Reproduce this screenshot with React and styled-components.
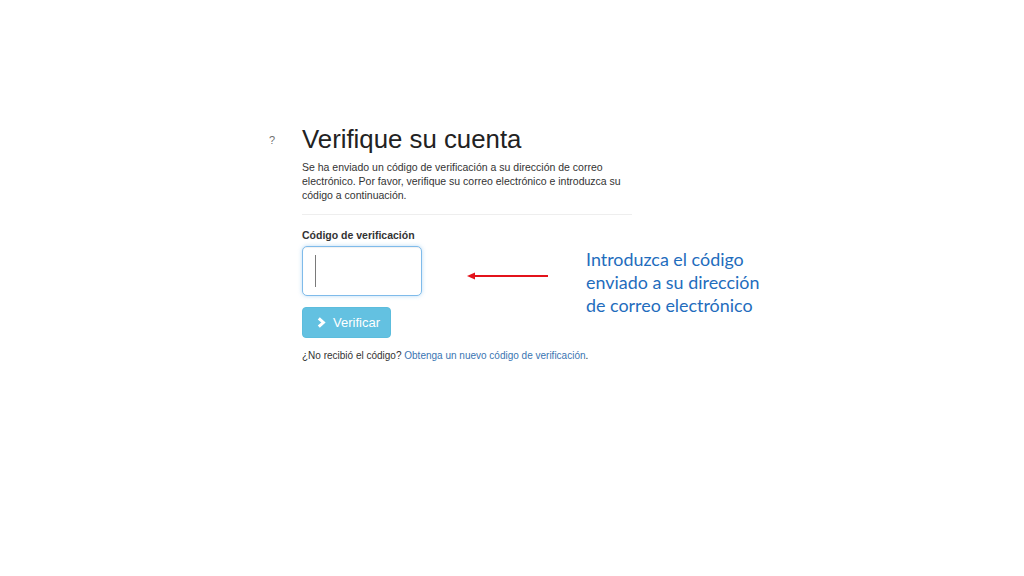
import React from "react";
import styled, { createGlobalStyle } from "styled-components";

const GlobalStyle = createGlobalStyle`
  html, body {
    margin: 0;
    padding: 0;
    background: #ffffff;
  }
  body {
    font-family: "Liberation Sans", Arial, sans-serif;
    color: #333333;
  }
`;

const Page = styled.main`
  width: 1024px;
  height: 576px;
  box-sizing: border-box;
  padding: 124px 0 0 302px;
  overflow: hidden;
`;

const Form = styled.section`
  display: flex;
  flex-direction: column;
  width: 330px;
`;

const Title = styled.h1`
  position: relative;
  margin: 0;
  font-family: "Liberation Sans", Arial, sans-serif;
  font-weight: 400;
  font-size: 25.8px;
  line-height: 30px;
  color: #222222;
`;

const StrayMark = styled.span`
  position: absolute;
  left: -33px;
  top: 10px;
  font-size: 11px;
  line-height: 12px;
  color: #6f6f6f;
`;

const Intro = styled.p`
  margin: 5.5px 0 0;
  font-size: 10.5px;
  line-height: 14px;
  color: #333333;
`;

const Divider = styled.hr`
  width: 330px;
  margin: 12.5px 0 0;
  border: 0;
  border-top: 1px solid #eeeeee;
`;

const Label = styled.label`
  margin-top: 12.5px;
  font-size: 10.5px;
  line-height: 14px;
  font-weight: 700;
  color: #333333;
`;

const InputRow = styled.div`
  display: flex;
  align-items: flex-start;
  height: 50px;
  margin-top: 4.5px;
  width: 700px;
`;

const CodeBox = styled.div`
  box-sizing: border-box;
  width: 120px;
  height: 50px;
  flex: none;
  display: flex;
  align-items: center;
  padding-left: 12px;
  border: 1px solid #7fbbea;
  border-radius: 5px;
  box-shadow: 0 0 4px rgba(102, 175, 233, 0.45), inset 0 1px 1px rgba(0, 0, 0, 0.06);
  background: #ffffff;
`;

const Caret = styled.span`
  display: block;
  width: 1px;
  height: 32px;
  background: #7a7a7a;
`;

const ArrowWrap = styled.div`
  flex: none;
  width: 82px;
  height: 10px;
  margin: 21px 0 0 45px;
`;

const Note = styled.p`
  flex: none;
  margin: 2px 0 0 37px;
  font-family: Lato, "Open Sans", sans-serif;
  font-size: 17.9px;
  line-height: 23px;
  color: #1f6dbd;
`;

const VerifyButton = styled.button`
  align-self: flex-start;
  display: flex;
  align-items: center;
  gap: 7px;
  box-sizing: border-box;
  width: 89px;
  height: 31px;
  margin-top: 11px;
  padding: 0 0 0 14px;
  border: 1px solid #5cbddd;
  border-radius: 4px;
  background: #63c1e1;
  color: #ffffff;
  font-family: "Liberation Sans", Arial, sans-serif;
  font-size: 13px;
  cursor: pointer;
`;

const Footer = styled.p`
  margin: 10.5px 0 0;
  font-size: 10px;
  line-height: 14px;
  color: #333333;
  white-space: nowrap;
`;

const Link = styled.a`
  color: #3a75b2;
  text-decoration: none;
`;

function RedArrow() {
  return (
    <svg width="82" height="10" viewBox="0 0 82 10">
      <line x1="5" y1="5" x2="81" y2="5" stroke="#e3131b" strokeWidth="2.2" />
      <polygon points="0,5 8,1.5 8,8.5" fill="#e3131b" />
    </svg>
  );
}

function Chevron() {
  return (
    <svg width="9" height="11" viewBox="0 0 9 11">
      <polyline
        points="1.8,1.3 6.4,5.5 1.8,9.7"
        fill="none"
        stroke="#ffffff"
        strokeWidth="3"
        strokeLinejoin="miter"
      />
    </svg>
  );
}

export default function App() {
  return (
    <>
      <GlobalStyle />
      <Page>
        <Form>
          <Title>
            <StrayMark>?</StrayMark>
            Verifique su cuenta
          </Title>
          <Intro>
            Se ha enviado un código de verificación a su dirección de correo
            <br />
            electrónico. Por favor, verifique su correo electrónico e introduzca su
            <br />
            código a continuación.
          </Intro>
          <Divider />
          <Label>Código de verificación</Label>
          <InputRow>
            <CodeBox>
              <Caret />
            </CodeBox>
            <ArrowWrap>
              <RedArrow />
            </ArrowWrap>
            <Note>
              Introduzca el código
              <br />
              enviado a su dirección
              <br />
              de correo electrónico
            </Note>
          </InputRow>
          <VerifyButton type="button">
            <Chevron />
            Verificar
          </VerifyButton>
          <Footer>
            ¿No recibió el código? <Link href="#">Obtenga un nuevo código de verificación</Link>.
          </Footer>
        </Form>
      </Page>
    </>
  );
}
